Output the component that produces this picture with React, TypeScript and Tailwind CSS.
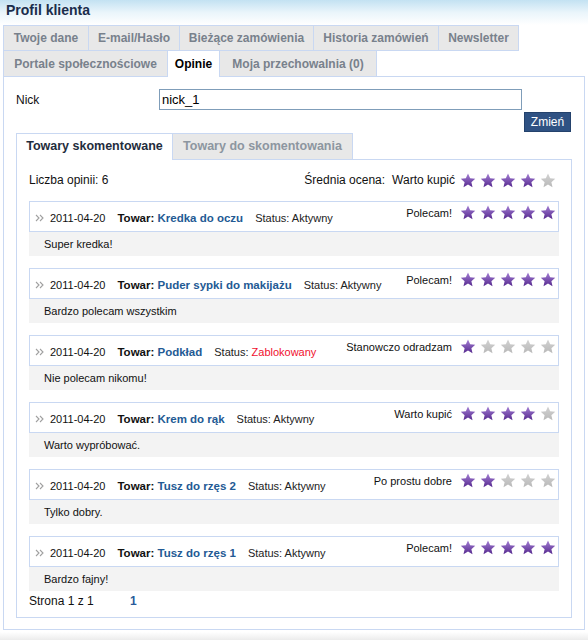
import React from "react";

const topTabs = [
  { label: "Twoje dane", w: "w-[86px]" },
  { label: "E-mail/Hasło", w: "w-[92px]" },
  { label: "Bieżące zamówienia", w: "w-[135px]" },
  { label: "Historia zamówień", w: "w-[126px]" },
  { label: "Newsletter", w: "w-[81px]" },
];

const secondTabs = [
  { label: "Portale społecznościowe", w: "w-[165px]", active: false },
  { label: "Opinie", w: "w-[53px]", active: true },
  { label: "Moja przechowalnia (0)", w: "w-[158px]", active: false },
];

const reviews = [
  { product: "Kredka do oczu", status: "Aktywny", label: "Polecam!", stars: 5, text: "Super kredka!" },
  { product: "Puder sypki do makijażu", status: "Aktywny", label: "Polecam!", stars: 5, text: "Bardzo polecam wszystkim" },
  { product: "Podkład", status: "Zablokowany", label: "Stanowczo odradzam", stars: 1, text: "Nie polecam nikomu!" },
  { product: "Krem do rąk", status: "Aktywny", label: "Warto kupić", stars: 4, text: "Warto wypróbować." },
  { product: "Tusz do rzęs 2", status: "Aktywny", label: "Po prostu dobre", stars: 2, text: "Tylko dobry." },
  { product: "Tusz do rzęs 1", status: "Aktywny", label: "Polecam!", stars: 5, text: "Bardzo fajny!" },
];

function Star({ on }: { on: boolean }) {
  return (
    <svg width="16" height="15" viewBox="0 0 24 23" className="block">
      <path
        d="M12 0.8l3.3 7.1 7.8.8-5.9 5.3 1.7 7.7L12 17.8l-6.9 3.9 1.7-7.7L0.9 8.7l7.8-.8z"
        fill={on ? "url(#starOn)" : "url(#starOff)"}
      />
    </svg>
  );
}

function Stars({ count }: { count: number }) {
  return (
    <div className="flex gap-[4px]">
      {[0, 1, 2, 3, 4].map((i) => (
        <Star key={i} on={i < count} />
      ))}
    </div>
  );
}

export default function App() {
  return (
    <div className="w-[588px] h-[640px] bg-white font-['Liberation_Sans',Arial,sans-serif] text-[#111] flex flex-col overflow-hidden">
      <svg width="0" height="0" className="block">
        <defs>
          <linearGradient id="starOn" x1="0" y1="0" x2="0" y2="1">
            <stop offset="0" stopColor="#a47fd4" />
            <stop offset="1" stopColor="#56298f" />
          </linearGradient>
          <linearGradient id="starOff" x1="0" y1="0" x2="0" y2="1">
            <stop offset="0" stopColor="#d2d2d2" />
            <stop offset="1" stopColor="#b9b9b9" />
          </linearGradient>
        </defs>
      </svg>

      {/* header */}
      <div className="h-[25px] shrink-0 bg-linear-to-b from-[#c3e2f2] via-[#eaf5fb] to-white pl-[6px] pt-[2px]">
        <h1 className="text-[14px] leading-[17px] font-bold text-[#1b2d4b]">Profil klienta</h1>
      </div>

      {/* main tabs */}
      <div className="flex pl-[3px] h-[26px] shrink-0">
        {topTabs.map((t, i) => (
          <div
            key={t.label}
            className={`${t.w} ${i > 0 ? "-ml-px" : ""} h-[26px] flex items-center justify-center border border-[#c9d8f2] bg-[#e8e8e8] text-[12px] font-bold text-[#78818c]`}
          >
            {t.label}
          </div>
        ))}
      </div>
      <div className="flex items-start pl-[3px] h-[26px] -mt-px shrink-0">
        {secondTabs.map((t, i) => (
          <div
            key={t.label}
            className={`${t.w} ${i > 0 ? "-ml-px" : ""} flex items-center justify-center border border-b-0 border-[#c9d8f2] text-[12px] font-bold ${
              t.active ? "relative z-10 h-[27px] pb-px bg-white text-black" : "h-[26px] bg-[#e8e8e8] text-[#78818c]"
            }`}
          >
            {t.label}
          </div>
        ))}
      </div>

      {/* main panel */}
      <div className="mx-[3px] w-[582px] h-[554px] shrink-0 border border-[#c9d8f2] px-[12px] pt-[12px]">
        <div className="flex items-center h-[21px]">
          <span className="w-[143px] text-[12px]">Nick</span>
          <input
            readOnly
            value="nick_1"
            className="w-[363px] h-[21px] border border-[#7f9db9] px-[2px] text-[13px] text-black outline-none"
          />
        </div>
        <div className="flex justify-end mt-[2px]">
          <button className="w-[47px] h-[20px] mr-[1px] bg-[#2f5283] border border-[#24426c] text-white text-[12px]">
            Zmień
          </button>
        </div>

        {/* inner tabs */}
        <div className="flex items-start h-[26px] mt-[1px]">
          <div className="relative z-10 w-[157px] h-[27px] pb-px flex items-center justify-center border border-b-0 border-[#c9d8f2] bg-white text-[12.5px] font-bold text-[#1f2d3d]">
            Towary skomentowane
          </div>
          <div className="-ml-px w-[181px] h-[26px] flex items-center justify-center border border-b-0 border-[#c9d8f2] bg-[#e8e8e8] text-[12.5px] font-bold text-[#8d96a0]">
            Towary do skomentowania
          </div>
        </div>

        <div className="h-[459px] border border-[#c9d8f2] px-[12px] pt-[8px]">
          <div className="flex items-center justify-between h-[24px] mb-[9px] pr-[3px] text-[12px]">
            <span>Liczba opinii: 6</span>
            <div className="flex items-center">
              <span>Średnia ocena:</span>
              <span className="ml-[7px] mr-[5px]">Warto kupić</span>
              <Stars count={4} />
            </div>
          </div>

          {reviews.map((r, i) => (
            <div key={r.product} className={i < reviews.length - 1 ? "mb-[12px]" : ""}>
              <div className="h-[31px] border border-[#c9d8f2] flex justify-between items-start">
                <div className="flex items-center pt-[9px] pl-[5px] text-[11px] leading-[14px]">
                  <svg width="9" height="8" viewBox="0 0 9 8" className="block">
                    <path d="M1 1l3 3-3 3M5 1l3 3-3 3" fill="none" stroke="#a0a0a0" strokeWidth="1.1" />
                  </svg>
                  <span className="ml-[6px]">2011-04-20</span>
                  <span className="ml-[12px] text-[11.5px] font-bold">
                    Towar: <span className="text-[#235a94]">{r.product}</span>
                  </span>
                  <span className="ml-[12px] text-[#222]">
                    Status:{" "}
                    <span className={r.status === "Zablokowany" ? "text-[#f0102e]" : ""}>{r.status}</span>
                  </span>
                </div>
                <div className="flex items-start pt-[3px] pr-[2px]">
                  <span className="mt-[1px] mr-[8px] text-[11px] leading-[14px]">{r.label}</span>
                  <Stars count={r.stars} />
                </div>
              </div>
              <div className="h-[24px] bg-[#f3f3f3] flex items-center pl-[15px] text-[11px]">{r.text}</div>
            </div>
          ))}

          <div className="flex items-center h-[20px] text-[12px]">
            <span className="w-[101px]">Strona 1 z 1</span>
            <span className="font-bold text-[#2a5a9a]">1</span>
          </div>
        </div>
      </div>

      <div className="h-[2px] shrink-0" />
      <div className="flex-1 bg-linear-to-b from-white to-[#ececec]" />
    </div>
  );
}
